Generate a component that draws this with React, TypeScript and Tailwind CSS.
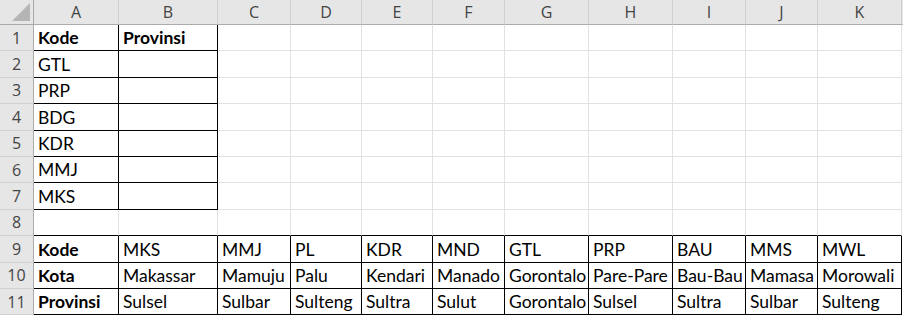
import React from 'react';

const cols = ['A', 'B', 'C', 'D', 'E', 'F', 'G', 'H', 'I', 'J', 'K'];

// row -> column -> value; bold cells are marked with a leading '*'
const data: Record<number, string[]> = {
  1: ['*Kode', '*Provinsi'],
  2: ['GTL'],
  3: ['PRP'],
  4: ['BDG'],
  5: ['KDR'],
  6: ['MMJ'],
  7: ['MKS'],
  9: ['*Kode', 'MKS', 'MMJ', 'PL', 'KDR', 'MND', 'GTL', 'PRP', 'BAU', 'MMS', 'MWL'],
  10: ['*Kota', 'Makassar', 'Mamuju', 'Palu', 'Kendari', 'Manado', 'Gorontalo', 'Pare-Pare', 'Bau-Bau', 'Mamasa', 'Morowali'],
  11: ['*Provinsi', 'Sulsel', 'Sulbar', 'Sulteng', 'Sultra', 'Sulut', 'Gorontalo', 'Sulsel', 'Sultra', 'Sulbar', 'Sulteng'],
};

const blackBottom = (r: number, c: number) => (r >= 1 && r <= 7 && c <= 1) || (r >= 8 && r <= 11);
const blackRight = (r: number, c: number) => (r >= 1 && r <= 7 && c <= 1) || (r >= 9 && r <= 11);

const App: React.FC = () => {
  const rows = Array.from({ length: 11 }, (_, i) => i + 1);

  return (
    <div className="h-[318px] w-[903px] overflow-hidden bg-white">
      <div className="grid grid-cols-[34px_85px_99px_73px_71px_71px_72px_84px_84px_73px_72px_84px_1px] grid-rows-[25px_repeat(11,26.4px)]">
        {/* select-all corner */}
        <div className="flex items-end justify-end border-r border-b border-[#ababab] bg-[#e6e6e6] pr-[3px] pb-[3px]">
          <svg width="18" height="18" viewBox="0 0 18 18">
            <polygon points="18,0 18,18 0,18" fill="#b5b5b5" />
          </svg>
        </div>
        {cols.map((c) => (
          <div
            key={c}
            className="flex items-center justify-center border-r border-b border-r-[#d0d0d0] border-b-[#ababab] bg-[#e6e6e6] font-['Open_Sans',sans-serif] text-[16px] text-[#444]"
          >
            {c}
          </div>
        ))}
        <div className="border-b border-[#ababab] bg-[#e6e6e6]" />

        {rows.map((r) => (
          <React.Fragment key={r}>
            <div className="flex items-center justify-center border-r border-b border-r-[#ababab] border-b-[#d0d0d0] bg-[#e6e6e6] font-['Open_Sans',sans-serif] text-[16px] text-[#444]">
              {r}
            </div>
            {cols.map((c, ci) => {
              const raw = data[r]?.[ci] ?? '';
              const bold = raw.startsWith('*');
              const text = bold ? raw.slice(1) : raw;
              return (
                <div
                  key={c}
                  className={`flex items-end overflow-visible whitespace-nowrap border-r border-b pl-[4px] pb-[2px] font-['Lato',sans-serif] text-[17.5px] leading-[20px] text-black ${
                    blackBottom(r, ci) ? 'border-b-black' : 'border-b-[#e1e1e1]'
                  } ${blackRight(r, ci) ? 'border-r-black' : 'border-r-[#e1e1e1]'} ${bold ? 'font-bold' : ''}`}
                >
                  {text}
                </div>
              );
            })}
            <div />
          </React.Fragment>
        ))}
      </div>
    </div>
  );
};

export default App;
